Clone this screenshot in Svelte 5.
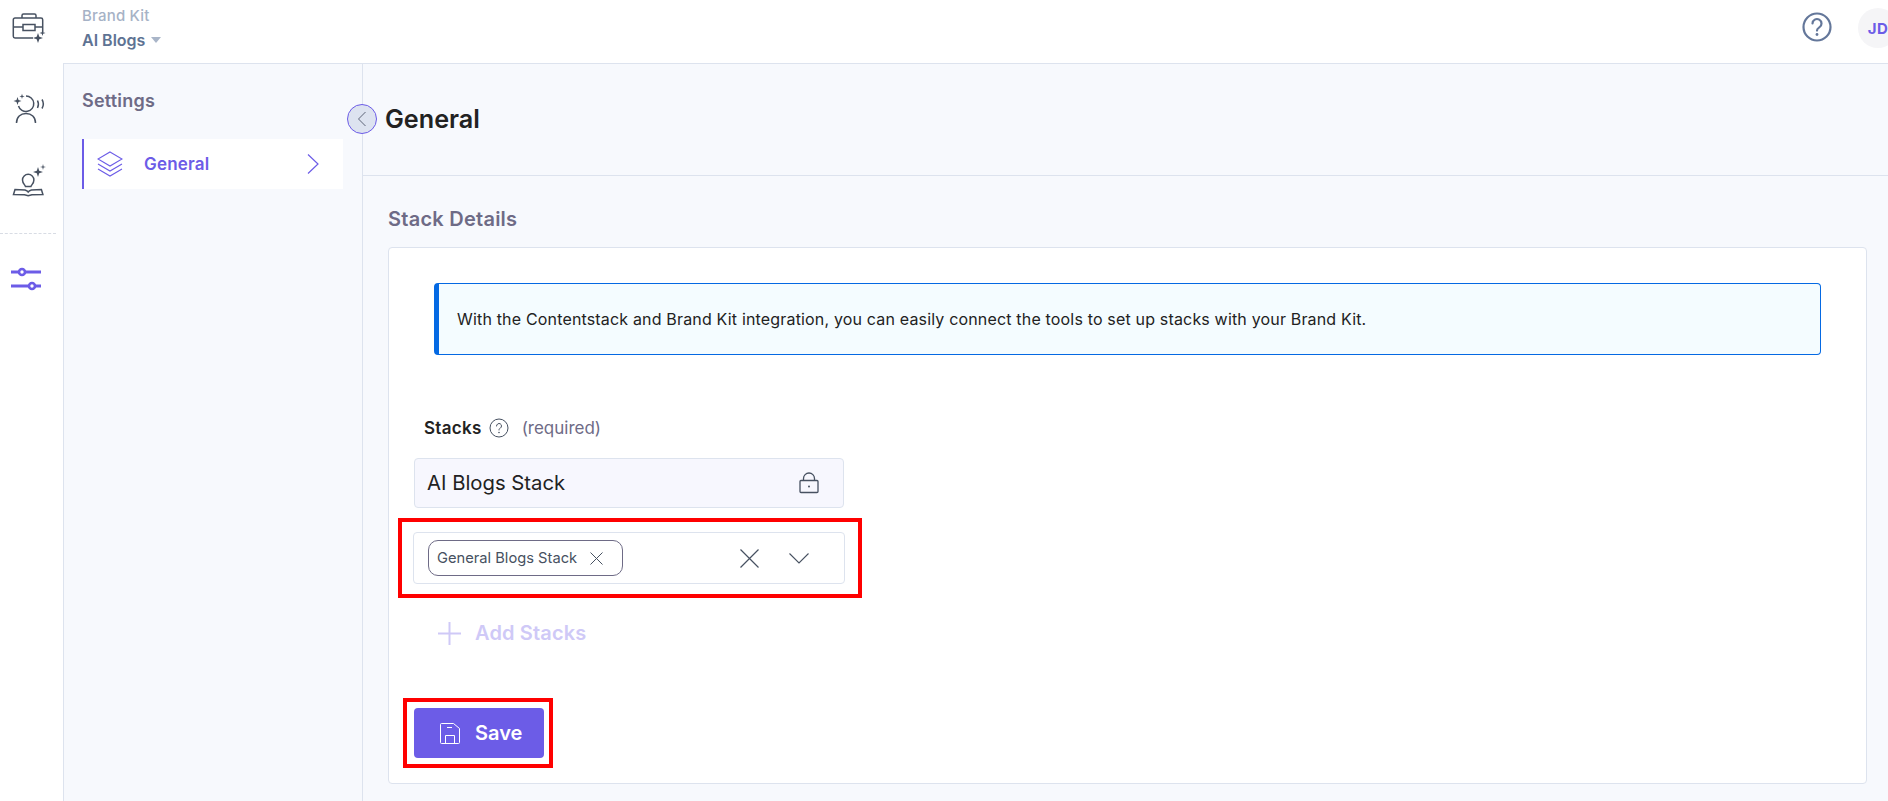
<script>
  const lead = 'With the Contentstack and Brand Kit integration, you can easily connect the tools to set up stacks with your Brand Kit.';
</script>

<div class="page">
  <nav class="rail">
    <div class="rail-top">
      <svg class="ic" width="34" height="34" viewBox="0 0 34 34" fill="none" stroke="#475161" stroke-width="1.500"><path d="M21 27H3a1.700 1.700 0 0 1-1.700-1.700V8.700A1.700 1.700 0 0 1 3 7h26a1.700 1.700 0 0 1 1.700 1.700V21"/><path d="M1.300 16H11M23 16h7.700"/><path d="M11 13.500h12v6H11z"/><path d="M10 7V4.500A1.500 1.500 0 0 1 11.500 3h11A1.500 1.500 0 0 1 24 4.500V7"/><path d="M26 22l1.300 3.700 3.700 1.300-3.700 1.300L26 32l-1.300-3.700-3.700-1.300 3.700-1.300zM30.500 19l.7 2.300 2.300.7-2.300.7-.7 2.300-.7-2.300-2.300-.7 2.300-.7z" fill="#475161" stroke="none"/></svg>
    </div>
    <svg class="ic i2" width="34" height="34" viewBox="0 0 34 34" fill="none" stroke="#475161" stroke-width="1.500"><path d="M14 2.900A7.800 7.800 0 1 1 6.500 13"/><path d="M4.500 30c0-6 4-9.500 9.500-9.500s9.500 3.500 9.500 9.500"/><path d="M25.500 7.500c1.300 2.500 1.300 5 0 7.500M30 6.500c1.800 3 1.800 6 0 9"/><path d="M5.500 4l1 3 3 1-3 1-1 3-1-3-3-1 3-1zM10 .8l.6 2 2 .6-2 .6-.6 2-.6-2-2-.6 2-.6z" fill="#475161" stroke="none"/></svg>
    <svg class="ic i3" width="34" height="34" viewBox="0 0 34 34" fill="none" stroke="#475161" stroke-width="1.500"><path d="M13.500 23.500c-.5-1.800-3-3-3-6.500a5.700 5.700 0 0 1 11.400 0c0 3.500-2.500 4.700-3 6.500z"/><path d="M1.500 31.500l1.500-5 10 .5c1.500.5 2.500 1 3.200 2 .7-1 1.700-1.500 3.200-2l10-.5 1.500 5-11 .2-3.700 1-3.700-1z"/><path d="M26 4l1.200 3.800L31 9l-3.800 1.200L26 14l-1.200-3.800L21 9l3.800-1.200zM31 1l.6 2.400 2.400.6-2.400.6-.6 2.400-.6-2.400-2.400-.6 2.400-.6z" fill="#475161" stroke="none"/></svg>
    <div class="dash"></div>
    <svg class="ic i4" width="34" height="34" viewBox="0 0 34 34" fill="none" stroke="#6c5ce7" stroke-width="3"><path d="M-1 10h30M-1 24h30"/><circle cx="10" cy="10" r="3" fill="#fff" stroke-width="2.600"/><circle cx="20" cy="24" r="3" fill="#fff" stroke-width="2.600"/></svg>
  </nav>

  <div class="content">
    <header class="top">
      <div class="crumb">
        <div class="brand">Brand Kit</div>
        <div class="proj">AI Blogs <span class="caret"></span></div>
      </div>
      <svg class="help" width="32" height="32" viewBox="0 0 32 32" fill="none" stroke="#64779a" stroke-width="2.200"><circle cx="16" cy="16" r="13.500"/><path d="M11.500 12.500a4.500 4.500 0 1 1 6.800 3.900c-1.500.9-2.300 1.600-2.300 3.200" stroke-linecap="round"/><circle cx="16" cy="23.500" r="1.400" fill="#64779a" stroke="none"/></svg>
      <div class="avatar"><span>JD</span></div>
    </header>

    <div class="body">
      <aside class="side">
        <h2>Settings</h2>
        <div class="item">
          <svg width="26" height="26" viewBox="0 0 26 26" fill="none" stroke="#6c5ce7" stroke-width="1.100"><path d="M13 1l12 7-12 7-12-7z"/><path d="M1 13l12 7 12-7"/><path d="M1 18l12 7 12-7"/></svg>
          <span class="item-t">General</span>
          <svg class="chev" width="12" height="20" viewBox="0 0 12 20" fill="none" stroke="#6c5ce7" stroke-width="1.200"><path d="M1 .5l10 9.500-10 9.500"/></svg>
        </div>
      </aside>

      <main class="main">
        <button class="collapse" aria-label="Collapse">
          <svg width="10" height="16" viewBox="0 0 10 16" fill="none" stroke="#5d6478" stroke-width="1"><path d="M8.500 1l-7 7 7 7"/></svg>
        </button>
        <div class="head"><h1>General</h1></div>
        <section class="sec">
          <h3>Stack Details</h3>
          <div class="card">
            <div class="alert">{lead}</div>
            <div class="label">
              <b>Stacks</b>
              <svg width="20" height="20" viewBox="0 0 20 20" fill="none" stroke="#475161" stroke-width="1"><circle cx="10" cy="10" r="9"/><path d="M7.500 8a2.500 2.500 0 1 1 3.800 2.100c-.9.500-1.300 1-1.300 1.900" stroke-linecap="round"/><circle cx="10" cy="14.500" r=".8" fill="#475161" stroke="none"/></svg>
              <span class="req">(required)</span>
            </div>
            <div class="input locked">
              <span>AI Blogs Stack</span>
              <svg width="20" height="22" viewBox="0 0 20 22" fill="none" stroke="#475161" stroke-width="1.300"><rect x="1" y="8.500" width="18" height="12" rx="1"/><path d="M4.500 8.500V6.500a5.500 5.500 0 0 1 11 0v2"/><circle cx="10" cy="14.500" r="1" fill="#475161" stroke="none"/></svg>
            </div>
            <div class="ring r1">
              <div class="input select">
                <div class="tag">
                  General Blogs Stack
                  <svg width="13" height="13" viewBox="0 0 13 13" stroke="#475161" stroke-width="1"><path d="M.5.500l12 12M12.500.500l-12 12"/></svg>
                </div>
                <svg class="x" width="19" height="19" viewBox="0 0 19 19" stroke="#475161" stroke-width="1.200"><path d="M.5.500l18 18M18.500.500l-18 18"/></svg>
                <svg class="dn" width="20" height="11" viewBox="0 0 20 11" fill="none" stroke="#475161" stroke-width="1.100"><path d="M.5.500L10 10 19.500.5"/></svg>
              </div>
            </div>
            <div class="add">
              <svg width="23" height="23" viewBox="0 0 23 23" stroke="#cfc9f7" stroke-width="2"><path d="M11.500 0v23M0 11.500h23"/></svg>
              Add Stacks
            </div>
            <div class="ring r2">
              <button class="save">
                <svg width="20" height="21" viewBox="0 0 20 21" fill="none" stroke="#fff" stroke-width="1"><path d="M1.500.500h12l6 5v14a1 1 0 0 1-1 1h-17a1 1 0 0 1-1-1v-18a1 1 0 0 1 1-1z"/><path d="M5.500 12.500h9v8h-9zM7 4.500h5"/></svg>
                Save
              </button>
            </div>
          </div>
        </section>
      </main>
    </div>
  </div>
</div>

<style>
  :global(body) { margin: 0; background: #fff; font-family: Inter, "Liberation Sans", sans-serif; }
  .page { display: flex; width: 1888px; height: 801px; overflow: hidden; color: #222; }
  h1, h2, h3 { margin: 0; }

  .rail { width: 63px; flex: none; box-sizing: border-box; padding-right: 5px; display: flex; flex-direction: column; align-items: center; background: #fff; }
  .ic { display: block; flex: none; overflow: visible; }
  .rail-top { height: 34px; padding-top: 11px; }
  .i2 { margin-top: 48px; }
  .i3 { margin-top: 36px; }
  .dash { width: 56px; align-self: flex-start; border-top: 1px dashed #d8dce4; margin-top: 36px; }
  .i4 { margin-top: 28px; }

  .content { flex: 1; min-width: 0; display: flex; flex-direction: column; }
  .top { height: 64px; flex: none; box-sizing: border-box; border-bottom: 1px solid #dde3ee; display: flex; align-items: flex-start; padding-left: 19px; background: #fff; }
  .crumb { flex: 1; padding-top: 8px; }
  .brand { font-size: 15px; font-weight: 500; letter-spacing: .2px; line-height: 16px; color: #a6b2c6; }
  .proj { font-size: 16px; font-weight: 600; line-height: 18px; margin-top: 7px; color: #5e7393; display: flex; align-items: center; gap: 6px; }
  .caret { width: 0; height: 0; border-left: 5px solid transparent; border-right: 5px solid transparent; border-top: 6px solid #a9b5c8; }
  .help { margin-top: 11px; flex: none; }
  .avatar { flex: none; width: 40px; height: 40px; margin: 8px -10px 0 25px; border-radius: 50%; background: #f5f5f7; color: #6c5ce7; font-size: 15px; font-weight: 700; letter-spacing: .5px; display: flex; align-items: center; justify-content: center; }

  .body { flex: 1; min-height: 0; display: flex; }
  .side { width: 300px; flex: none; box-sizing: border-box; background: #f7f9fd; border-left: 1px solid #dde3ee; border-right: 1px solid #dde3ee; padding: 27px 0 0 18px; }
  .side h2 { font-size: 18px; font-weight: 600; letter-spacing: .2px; line-height: 20px; color: #6e6b86; }
  .item { width: 261px; height: 50px; margin-top: 28px; box-sizing: border-box; background: #fff; border-left: 2px solid #6c5ce7; display: flex; align-items: center; padding-left: 13px; }
  .item-t { margin-left: 21px; flex: 1; font-size: 17px; font-weight: 600; letter-spacing: .2px; color: #6c5ce7; }
  .chev { margin-right: 24px; }

  .main { flex: 1; min-width: 0; position: relative; background: #f7f9fd; }
  .collapse { position: absolute; left: -16px; top: 40px; width: 30px; height: 30px; padding: 0; border: 1px solid #6c5ce7; border-radius: 50%; background: #dde3f0; display: flex; align-items: center; justify-content: center; }
  .head { height: 112px; box-sizing: border-box; border-bottom: 1px solid #dde3ee; padding: 40px 0 0 23px; }
  .head h1 { font-size: 25.200px; font-weight: 600; line-height: 30px; color: #222; margin-left: -1px; }
  .sec { padding: 32px 21px 0 25px; }
  .sec h3 { font-size: 20px; font-weight: 600; letter-spacing: .25px; line-height: 22px; color: #6e6b86; }
  .card { height: 537px; margin-top: 17px; box-sizing: border-box; background: #fff; border: 1px solid #dde3ee; border-radius: 4px; padding: 35px 45px 0 25px; }
  .alert { height: 72px; box-sizing: border-box; margin-left: 20px; background: #f4fcff; border: 1px solid #0469e3; border-left: 5px solid #0469e3; border-radius: 4px; padding-left: 18px; display: flex; align-items: center; font-size: 16px; letter-spacing: .17px; color: #222; }
  .label { display: flex; align-items: center; margin: 63px 0 0 10px; height: 20px; gap: 7px; font-size: 17px; }
  .label b { font-weight: 600; letter-spacing: .3px; color: #222; }
  .req { margin-left: 6px; color: #6e6b86; }
  .input { box-sizing: border-box; display: flex; align-items: center; border: 1px solid #dde3ee; border-radius: 4px; }
  .locked { width: 430px; height: 50px; margin-top: 20px; background: #f7f7fe; padding: 0 23px 0 12px; justify-content: space-between; font-size: 20.300px; line-height: 46px; color: #222; }
  .locked svg { margin-right: 1px; }
  .ring { box-sizing: border-box; border: 4px solid #f00; }
  .r1 { width: 464px; height: 80px; margin: 10px 0 0 -16px; padding: 10px 0 0 11px; }
  .select { width: 432px; height: 52px; padding-left: 14px; }
  .tag { box-sizing: border-box; height: 36px; width: 195px; flex: none; display: flex; align-items: center; gap: 13px; padding-left: 8px; border: 1px solid #6e6b86; border-radius: 10px; font-size: 14.700px; color: #475161; white-space: nowrap; }
  .x { margin-left: 117px; }
  .dn { margin-left: 30px; }
  .add { display: flex; align-items: center; gap: 14px; margin: 23px 0 0 24px; height: 24px; font-size: 20px; font-weight: 600; letter-spacing: .15px; color: #cfc9f7; }
  .r2 { width: 150px; height: 70px; margin: 53px 0 0 -11px; padding: 6px 7px; }
  .save { width: 130px; height: 50px; border: 0; border-radius: 4px; background: #6c5ce7; color: #fff; font: 600 20px Inter, "Liberation Sans", sans-serif; display: flex; align-items: center; gap: 15px; padding: 0 0 0 26px; }
</style>
